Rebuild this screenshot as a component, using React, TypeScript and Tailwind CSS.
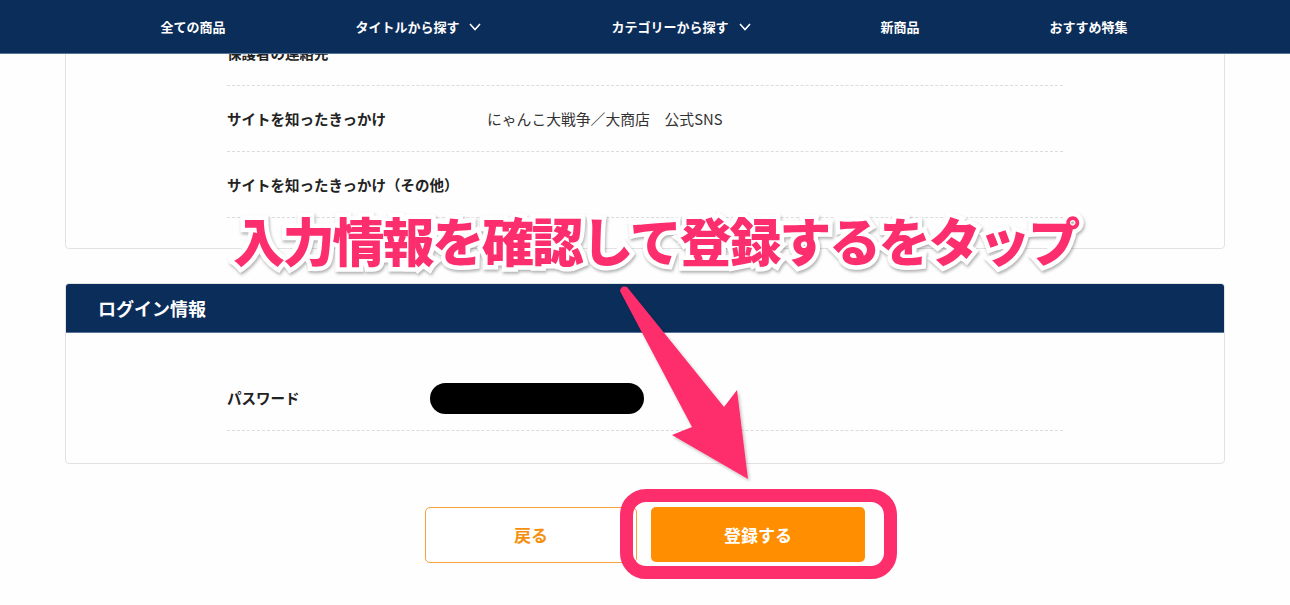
import React from 'react'

const NAV_ITEMS = [
  { label: '全ての商品', caret: false },
  { label: 'タイトルから探す', caret: true },
  { label: 'カテゴリーから探す', caret: true },
  { label: '新商品', caret: false },
  { label: 'おすすめ特集', caret: false },
]

const PROFILE_ROWS = [
  { label: '保護者の連絡先', value: '' },
  { label: 'サイトを知ったきっかけ', value: 'にゃんこ大戦争／大商店　公式SNS' },
  { label: 'サイトを知ったきっかけ（その他）', value: '' },
]

function Caret() {
  return (
    <svg width="12" height="8" viewBox="0 0 12 8" fill="none" className="ml-[10px]">
      <polyline points="1,1 6,6.5 11,1" stroke="white" strokeWidth="1.6" />
    </svg>
  )
}

function Row({ label, children }: { label: string; children?: React.ReactNode }) {
  return (
    <div className="flex items-center border-b border-dashed border-[#dcdcdc] pt-[24px] pb-[23px] leading-[18px]">
      <div className="w-[260px] shrink-0 text-[14.5px] font-bold text-[#222]">{label}</div>
      <div className="text-[14.8px] text-[#333]">{children}</div>
    </div>
  )
}

export default function App() {
  return (
    <div className="relative h-[605px] w-full overflow-hidden bg-[#fefefe] font-['Noto_Sans_CJK_JP','Noto_Sans',sans-serif]">
      {/* sticky header */}
      <header className="absolute inset-x-0 top-0 z-20 h-[54px] border-b border-[#56739a] bg-[#0b2d5a]">
        <nav className="flex h-full items-center justify-center gap-[130px] pr-[2px]">
          {NAV_ITEMS.map((item) => (
            <div key={item.label} className="flex items-center text-[13px] font-bold text-white">
              {item.label}
              {item.caret && <Caret />}
            </div>
          ))}
        </nav>
      </header>

      <main className="mx-auto w-[1160px]">
        <section className="rounded-b-[4px] border border-[#e2e2e2] px-[161px] pt-[19px] pb-[30px]">
          {PROFILE_ROWS.map((r) => (
            <Row key={r.label} label={r.label}>
              {r.value}
            </Row>
          ))}
        </section>

        <section className="mt-[34px] overflow-hidden rounded-[4px] border border-[#e2e2e2]">
          <div className="flex h-[49px] items-center border-b border-[#56739a] bg-[#0b2d5a] pl-[32px] text-[18px] font-bold text-white">
            ログイン情報
          </div>
          <div className="px-[161px] pt-[32px] pb-[32px]">
            <Row label="パスワード">
              <div className="-my-[7px] -ml-[57px] h-[31px] w-[214px] rounded-full bg-black" />
            </Row>
          </div>
        </section>

        <div className="mt-[43px] flex justify-center gap-[14px]">
          <button className="h-[56px] w-[212px] rounded-[5px] border border-[#f7a13a] bg-white text-[17px] font-bold text-[#f5900f]">
            戻る
          </button>
          <div className="relative">
            <button className="h-[55px] w-[214px] rounded-[5px] bg-[#ff8f00] text-[17px] font-bold text-white">
              登録する
            </button>
            <div className="pointer-events-none absolute -top-[18px] -bottom-[16px] -left-[31px] -right-[32px] z-10 rounded-[26px] border-[13px] border-[#fe2d6c]" />
          </div>
        </div>
      </main>

      {/* annotation layer */}
      <div className="pointer-events-none absolute inset-0 z-10">
        <svg width="1290" height="605" viewBox="0 0 1290 605" className="absolute inset-0">
          <defs>
            <filter id="sh" x="-20%" y="-20%" width="140%" height="140%">
              <feDropShadow dx="1.5" dy="2" stdDeviation="1.5" floodColor="#000" floodOpacity="0.25" />
            </filter>
          </defs>
          <path
            d="M620 291 Q621 285 627 287 L724 407 L737 390 L748 479 L672 435 L692 427 Z"
            fill="#fe2d6c"
            filter="url(#sh)"
          />
        </svg>
        <div className="absolute left-[233px] top-[204px] whitespace-nowrap text-[52px] font-black leading-[72px] tracking-[-2.2px] text-[#fd2e6e] [-webkit-text-stroke:9px_white] [paint-order:stroke_fill] [filter:drop-shadow(1px_2px_1.5px_rgba(0,0,0,0.3))]">
          入力情報を確認して登録するをタップ
        </div>
      </div>
    </div>
  )
}
